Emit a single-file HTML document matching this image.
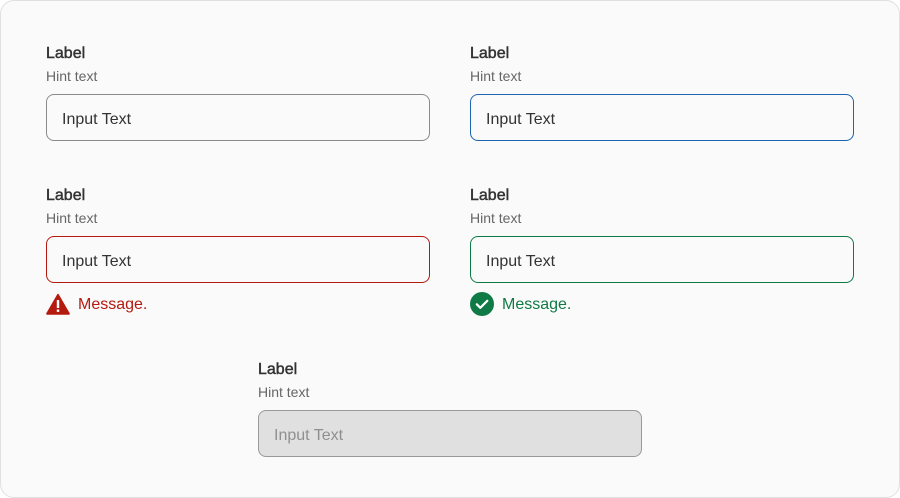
<!DOCTYPE html>
<html><head><meta charset="utf-8"><style>
*{box-sizing:border-box;margin:0;padding:0}
body{width:900px;height:498px;background:#fff;font-family:"Liberation Sans",sans-serif;position:relative;overflow:hidden}
.card{position:absolute;left:0;top:0;width:900px;height:498px;background:#fafafa;border:1px solid #e0e0e0;border-radius:14px}
.lab{position:absolute;font-size:16px;font-weight:normal;-webkit-text-stroke:0.45px #333;color:#333;line-height:18px}
.hint{position:absolute;font-size:14px;color:#666;line-height:16px}
.in{position:absolute;width:384px;height:47px;border:1px solid #8a8a8a;border-radius:8px;background:#fafafa;font-size:16px;color:#333;padding-left:15px;padding-top:2px;line-height:46px}
.msg{position:absolute;font-size:16px;line-height:22px;display:flex;align-items:center}
.msg span{position:relative;top:1px}
.msg svg{margin-right:8px}
</style></head><body>
<div class="card"></div>

<div class="lab" style="left:46px;top:45px">Label</div>
<div class="hint" style="left:46px;top:68px">Hint text</div>
<div class="in" style="left:46px;top:94px">Input Text</div>

<div class="lab" style="left:470px;top:45px">Label</div>
<div class="hint" style="left:470px;top:68px">Hint text</div>
<div class="in" style="left:470px;top:94px;border-color:#1a64b0">Input Text</div>

<div class="lab" style="left:46px;top:187px">Label</div>
<div class="hint" style="left:46px;top:210px">Hint text</div>
<div class="in" style="left:46px;top:236px;border-color:#b41a0f">Input Text</div>
<div class="msg" style="left:46px;top:293px;color:#b41a0f"><svg width="24" height="22" viewBox="0 0 24 22"><path d="M12 1.5 L23 20.5 Q23.3 21 22.7 21 H1.3 Q0.7 21 1 20.5 Z" fill="#b41a0f" stroke="#b41a0f" stroke-linejoin="round" stroke-width="1.5"/><rect x="10.8" y="7" width="2.4" height="8" fill="#fff"/><rect x="10.8" y="16.5" width="2.4" height="2.4" fill="#fff"/></svg><span>Message.</span></div>

<div class="lab" style="left:470px;top:187px">Label</div>
<div class="hint" style="left:470px;top:210px">Hint text</div>
<div class="in" style="left:470px;top:236px;border-color:#0f7a45">Input Text</div>
<div class="msg" style="left:470px;top:292px;color:#0f7a45"><svg width="24" height="24" viewBox="0 0 24 24"><circle cx="12" cy="12" r="12" fill="#0f7a45"/><path d="M6.8 12.3 L10.3 15.8 L17.3 8.8" fill="none" stroke="#fff" stroke-width="2.2" stroke-linecap="round" stroke-linejoin="round"/></svg><span>Message.</span></div>

<div class="lab" style="left:258px;top:361px">Label</div>
<div class="hint" style="left:258px;top:384px">Hint text</div>
<div class="in" style="left:258px;top:410px;background:#e0e0e0;border-color:#999;color:#8f8f8f">Input Text</div>
</body></html>
